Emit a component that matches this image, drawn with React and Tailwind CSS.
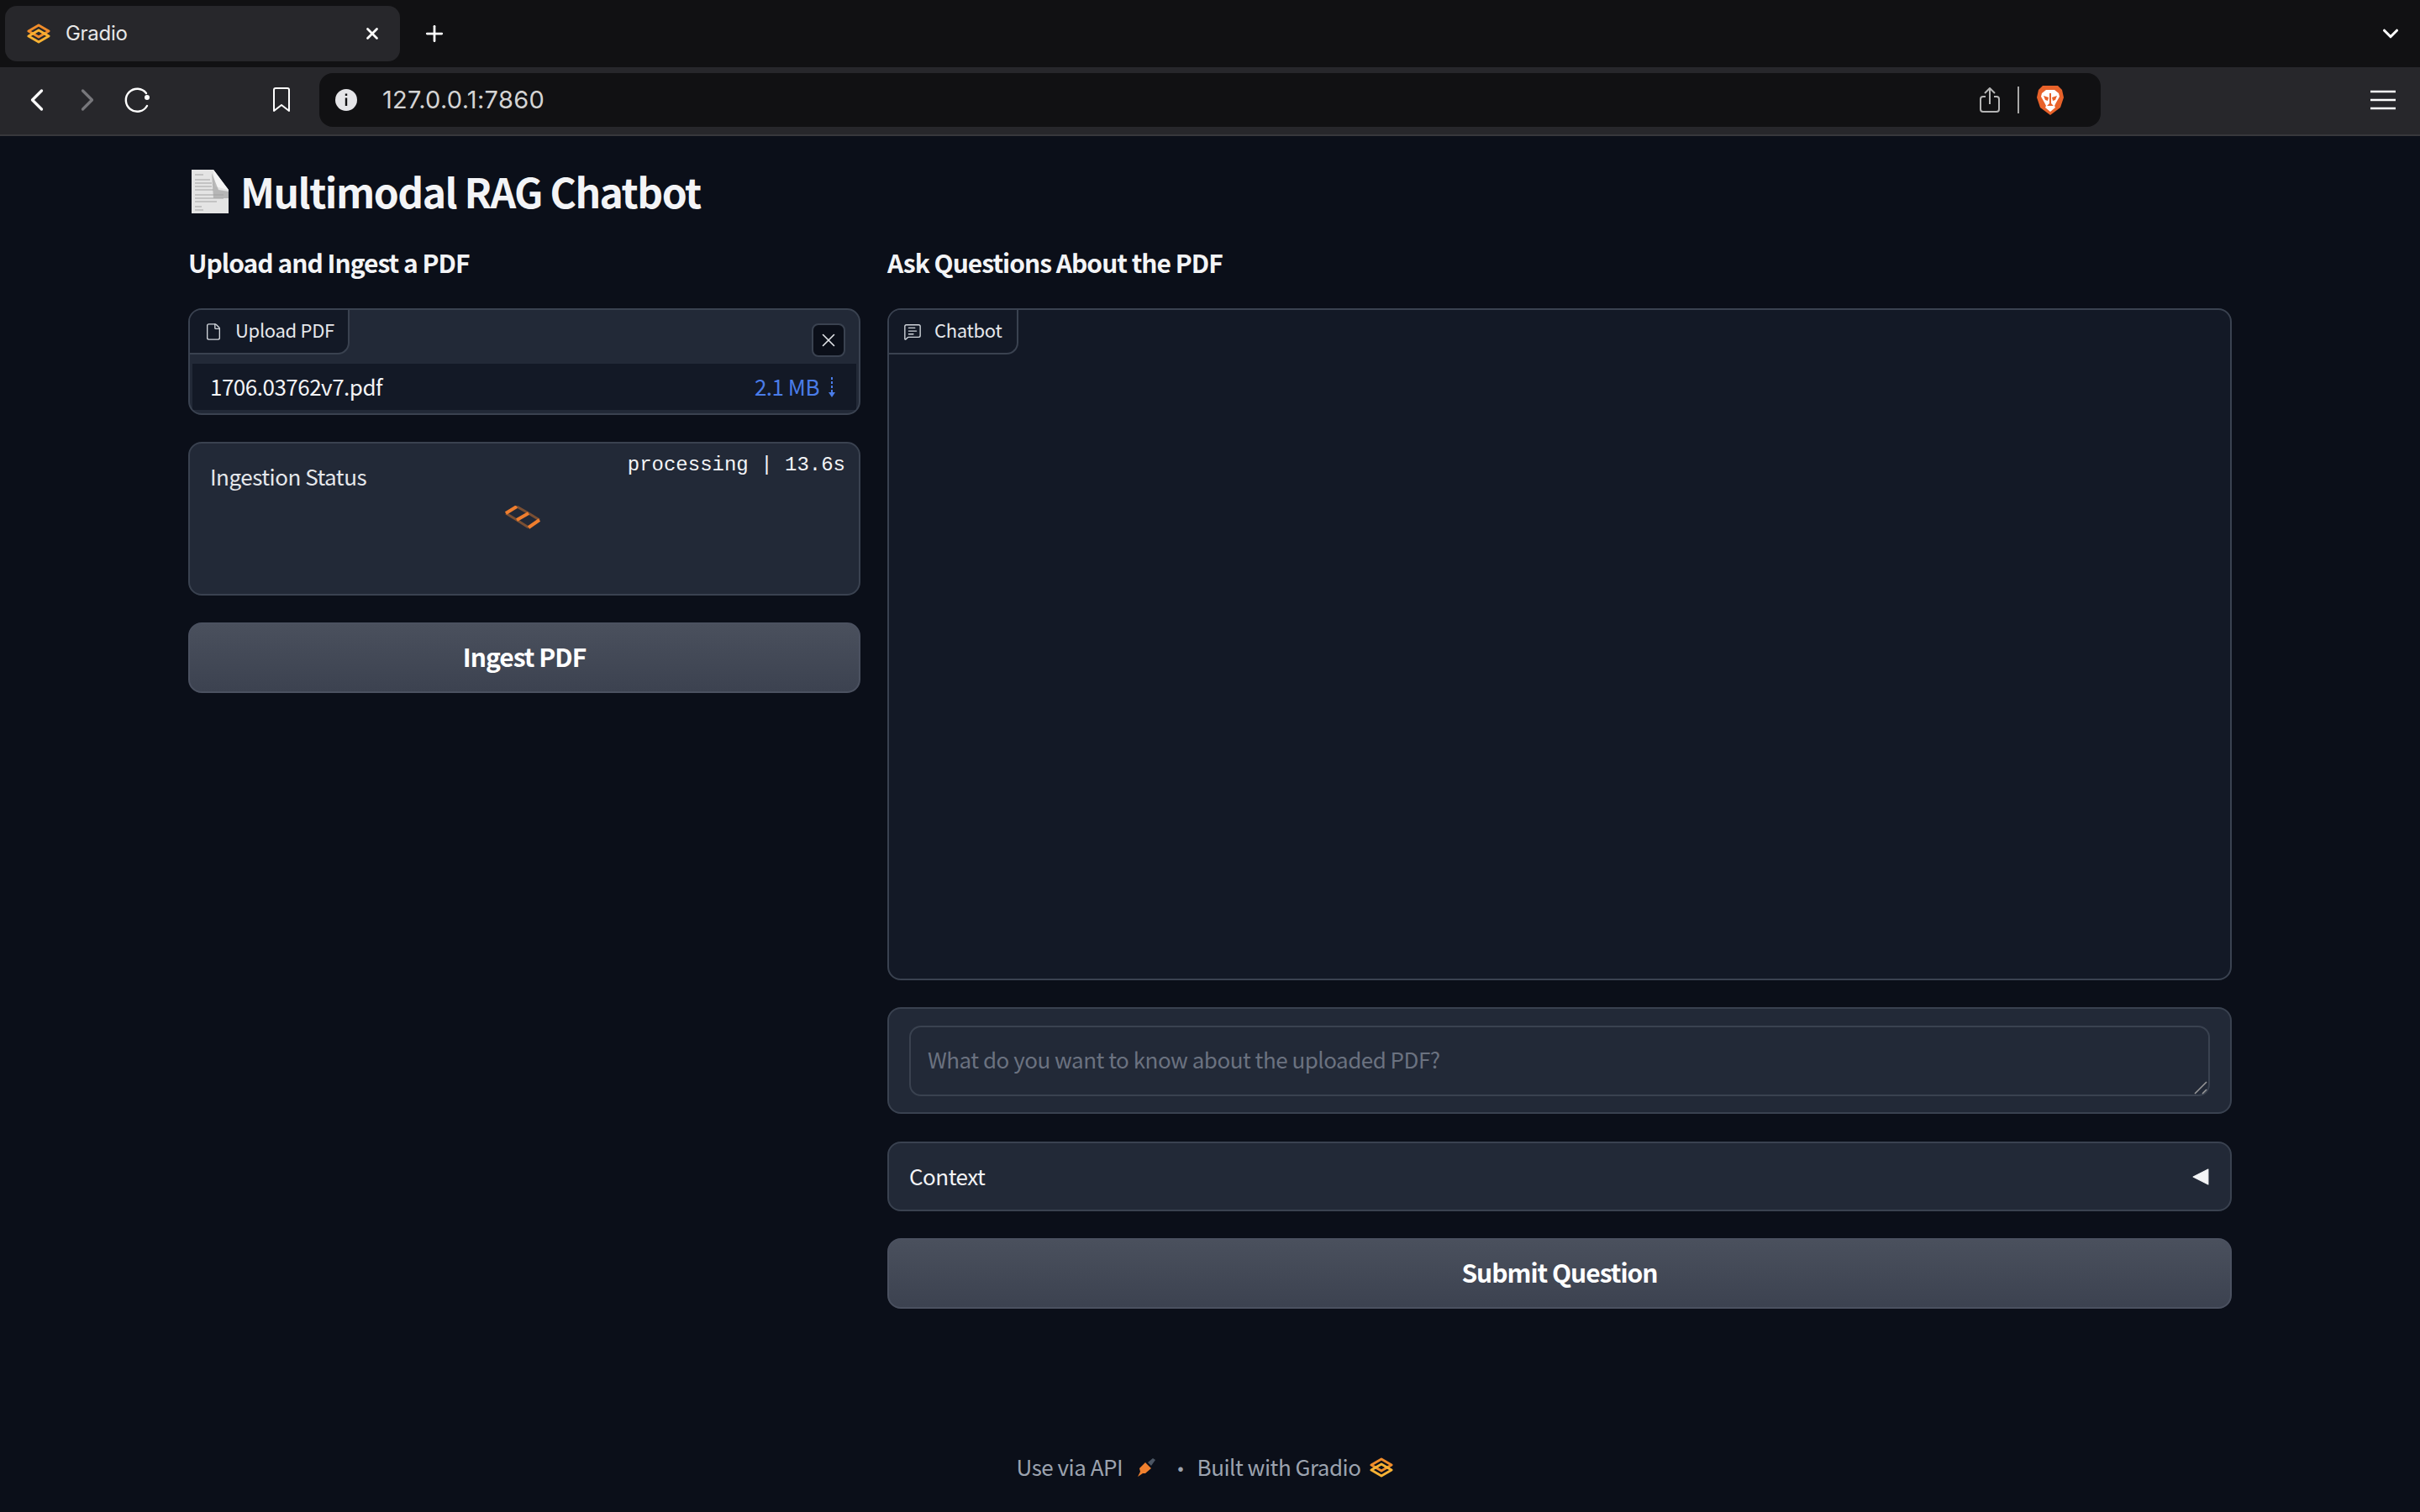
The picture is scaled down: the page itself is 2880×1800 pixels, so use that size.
import React from 'react';
import { ChevronLeft, ChevronRight, Plus, X, ChevronDown, File, MessageSquareText } from 'lucide-react';

const GradioLogo = ({ className }) => (
  <svg viewBox="0 0 28 24" className={className} fill="none" strokeWidth="3" strokeLinejoin="round">
    <path d="M14 2 L26 9 L14 16 L2 9 Z" stroke="#f08c2a" />
    <path d="M14 8 L26 15 L14 22 L2 15 Z" stroke="#f7b234" />
  </svg>
);

const DocIcon = () => (
  <svg viewBox="0 0 44 52" className="w-[44px] h-[52px] shrink-0 mr-[14px]">
    <path d="M0 0 H26 L44 24 V52 H0 Z" fill="#e4e4e4" />
    <path d="M26 0 L44 24 L28 20 Z" fill="#f4f4f4" />
    <path d="M24 4 L32 24 L44 26 V34 H26 Z" fill="#8f8f8f" opacity="0.55" />
    <g stroke="#a3a3a3" strokeWidth="1">
      <path d="M4 6 H14" />
      <path d="M4 12 H22" />
      <path d="M4 16 H24" />
      <path d="M4 20 H24" />
      <path d="M4 24 H26" />
      <path d="M4 30 H38" />
      <path d="M4 34 H38" />
      <path d="M4 38 H30" />
      <path d="M4 44 H12" />
      <path d="M4 48 H14" />
    </g>
  </svg>
);

const BraveLogo = () => (
  <svg viewBox="0 0 32 36" className="w-[32px] h-[36px]">
    <path d="M7 1 H25 L30 6 L32 15 L28 27 L16 36 L4 27 L0 15 L2 6 Z" fill="#e8622a" />
    <path d="M6 10 L11 6 H21 L26 10 L27 14 L23 21 L21 25 L22 27 L16 32 L10 27 L11 25 L9 21 L5 14 Z" fill="#ffffff" />
    <path d="M8 13 L14 15 L13 19 L10 18 Z M24 13 L18 15 L19 19 L22 18 Z" fill="#e8622a" />
    <path d="M15 10 H17 V22 L20 25 H12 L15 22 Z" fill="#e8622a" />
    <path d="M13 26 H19 L16 29 Z" fill="#ffffff" />
  </svg>
);

const ReloadIcon = () => (
  <svg viewBox="0 0 32 32" className="w-[32px] h-[32px]" fill="none" stroke="#ffffff" strokeWidth="2.4" strokeLinecap="round">
    <path d="M26 8 A13.5 13.5 0 1 0 27 23" />
    <circle cx="27" cy="13" r="3" fill="#ffffff" stroke="none" />
  </svg>
);

const BookmarkIcon = () => (
  <svg viewBox="0 0 24 32" className="w-[24px] h-[32px]" fill="none" stroke="#ffffff" strokeWidth="2" strokeLinejoin="round">
    <path d="M5 2 H19 A2 2 0 0 1 21 4 V29 L12 22 L3 29 V4 A2 2 0 0 1 5 2 Z" />
  </svg>
);

const InfoIcon = () => (
  <svg viewBox="0 0 28 28" className="w-[28px] h-[28px]">
    <circle cx="14" cy="14" r="13" fill="#e5e5e8" />
    <path d="M12.8 11.5 H15.2 V21 H12.8 Z M12.8 6.5 H15.2 V9 H12.8 Z" fill="#111113" />
  </svg>
);

const ShareIcon = () => (
  <svg viewBox="0 0 24 30" className="w-[24px] h-[30px]" fill="none" stroke="#b5b5b5" strokeWidth="2" strokeLinejoin="round">
    <path d="M7 11 H4 A3 3 0 0 0 1 14 V26 A3 3 0 0 0 4 29 H20 A3 3 0 0 0 23 26 V14 A3 3 0 0 0 20 11 H17" />
    <path d="M12 20 V2 M6 7 L12 1 L18 7" />
  </svg>
);

const MenuIcon = () => (
  <svg viewBox="0 0 30 24" className="w-[30px] h-[24px]" fill="none" stroke="#ffffff" strokeWidth="2.4">
    <path d="M0 2 H30 M0 12 H30 M0 22 H30" />
  </svg>
);

const Spinner = () => (
  <svg viewBox="0 0 42 28" className="w-[42px] h-[28px]" fill="none" strokeWidth="3">
    <path d="M14 1 L28 9 M28 9 L41 17 M1 9 L14 17 L28 26" stroke="#7a4f33" />
    <path d="M14 1 L1 9 M28 9 L14 17 M41 17 L28 26" stroke="#ee7d2e" strokeWidth="4" />
  </svg>
);

const BlockLabel = ({ icon: Icon, width, children }) => (
  <div className={`flex items-center h-[53px] ${width} pl-[17px] gap-[15px] border-r-2 border-b-2 border-[#3a4250] rounded-br-[14px] bg-[#131926] text-[22px] tracking-[-0.3px] text-[#e5e7eb]`}>
    <Icon size={22} strokeWidth={1.5} className="text-[#d1d5db]" />
    <span className="pb-[5px]">{children}</span>
  </div>
);

const PrimaryButton = ({ children }) => (
  <button className="h-[84px] w-full pb-[3px] rounded-[16px] border-2 border-[#4b5160] bg-gradient-to-b from-[#4a505d] to-[#3c4250] text-[30px] tracking-[-1px] font-semibold text-white">
    {children}
  </button>
);

export default function App() {
  return (
    <div className="flex flex-col h-[1800px] bg-[#0b0f19] text-[#f3f4f6] font-['Noto_Sans_CJK_SC','Noto_Sans',sans-serif] overflow-hidden">
      {/* browser chrome */}
      <div className="flex items-center h-[80px] pl-[6px] pr-[20px] bg-[#111113] font-['Inter',sans-serif]">
        <div className="flex items-center w-[470px] h-[66px] pl-[26px] pr-[22px] rounded-[14px] bg-[#27272b]">
          <GradioLogo className="w-[28px] h-[24px]" />
          <span className="ml-[18px] text-[24px] tracking-[-0.3px] text-[#e8e8e8]">Gradio</span>
          <X size={22} strokeWidth={3} className="ml-auto text-white" />
        </div>
        <Plus size={30} strokeWidth={2.2} className="ml-[26px] text-white" />
        <ChevronDown size={30} strokeWidth={2.5} className="ml-auto text-white" />
      </div>
      <div className="flex items-center h-[82px] pb-[2px] border-b-2 border-[#38383c] bg-[#27272b] font-['Inter',sans-serif]">
        <ChevronLeft size={44} strokeWidth={1.8} className="ml-[22px] text-white" />
        <ChevronRight size={44} strokeWidth={1.8} className="ml-[16px] text-[#77777b]" />
        <div className="ml-[22px]"><ReloadIcon /></div>
        <div className="ml-[143px]"><BookmarkIcon /></div>
        <div className="flex items-center w-[2120px] h-[64px] ml-[33px] pl-[18px] pr-[44px] rounded-[16px] bg-[#111113]">
          <InfoIcon />
          <span className="ml-[29px] text-[29px] tracking-[0.3px] text-[#d4d4d4]">127.0.0.1:7860</span>
          <div className="ml-auto"><ShareIcon /></div>
          <div className="w-[2px] h-[32px] mx-[21px] bg-[#a8a8a8]" />
          <BraveLogo />
        </div>
        <div className="ml-[321px]"><MenuIcon /></div>
      </div>

      {/* page */}
      <div className="flex flex-col flex-1 min-h-0 pl-[224px] pr-[224px]">
        <h1 className="flex items-center h-[56px] mt-[38px] ml-[4px] text-[48px] tracking-[-1.5px] font-semibold text-[#f3f4f6]">
          <DocIcon />
          <span className="pb-[3px]">Multimodal RAG Chatbot</span>
        </h1>

        <div className="flex gap-[32px] mt-[38px]">
          {/* left column */}
          <div className="flex flex-col w-[800px] shrink-0">
            <h2 className="h-[40px] mb-[33px] text-[30px] tracking-[-1px] leading-[36px] font-semibold">Upload and Ingest a PDF</h2>
            <div className="relative h-[127px] mb-[32px] rounded-[16px] border-2 border-[#3a4250] bg-[#222937] overflow-hidden">
              <BlockLabel icon={File} width="w-[190px]">Upload PDF</BlockLabel>
              <button className="absolute top-[16px] right-[16px] flex items-center justify-center w-[40px] h-[40px] rounded-[8px] border-2 border-[#3a4250] bg-[#0b0f19]">
                <X size={26} strokeWidth={1.5} className="text-[#e5e7eb]" />
              </button>
              <div className="flex items-center justify-between h-[55px] mt-[11px] mx-[3px] pl-[21px] pr-[22px] bg-[#131926] text-[26px] tracking-[-0.5px]">
                <span className="pb-[3px] text-[#f3f4f6]">1706.03762v7.pdf</span>
                <span className="flex items-center gap-[8px] text-[#4a7ce8]">
                  <span className="pb-[3px]">2.1 MB</span>
                  <svg viewBox="0 0 14 24" className="w-[14px] h-[24px]" fill="#4a7ce8">
                    <path d="M6 0 h2 v3 h-2 z M6 5 h2 v3 h-2 z M6 10 h2 v3 h-2 z M6 15 h2 v3 h3 l-4 6 l-4 -6 h3 z" />
                  </svg>
                </span>
              </div>
            </div>
            <div className="relative flex flex-col h-[183px] mb-[32px] pt-[21px] pl-[24px] rounded-[16px] border-2 border-[#3a4250] bg-[#222937]">
              <span className="text-[26px] tracking-[-0.5px] leading-[36px] text-[#e5e7eb]">Ingestion Status</span>
              <span className="absolute top-[10px] right-[16px] text-[24px] leading-[32px] text-[#f3f4f6] font-['Liberation_Mono',monospace]">processing | 13.6s</span>
              <div className="absolute inset-x-0 top-[74px] flex justify-center pr-[5px]">
                <Spinner />
              </div>
            </div>
            <PrimaryButton>Ingest PDF</PrimaryButton>
          </div>

          {/* right column */}
          <div className="flex flex-col flex-1 min-w-0">
            <h2 className="h-[40px] mb-[33px] text-[30px] tracking-[-1px] leading-[36px] font-semibold">Ask Questions About the PDF</h2>
            <div className="h-[800px] mb-[32px] rounded-[16px] border-2 border-[#3a4250] bg-[#131926] overflow-hidden">
              <BlockLabel icon={MessageSquareText} width="w-[154px]">Chatbot</BlockLabel>
            </div>
            <div className="h-[127px] mb-[33px] pt-[20px] px-[24px] rounded-[16px] border-2 border-[#3a4250] bg-[#222937]">
              <div className="relative">
                <textarea
                  rows={1}
                  placeholder="What do you want to know about the uploaded PDF?"
                  className="block w-full h-[84px] px-[20px] py-[18px] rounded-[14px] border-2 border-[#3a4250] bg-[#222937] text-[26px] tracking-[-0.5px] leading-[40px] placeholder:text-[#6b7280] outline-none resize-none"
                />
                <svg viewBox="0 0 16 16" className="absolute bottom-[2px] right-[3px] w-[16px] h-[16px]" fill="none" stroke="#9a9a9a" strokeWidth="1.5">
                  <path d="M1 15 L15 1 M10 15 L15 10" />
                </svg>
              </div>
            </div>
            <div className="flex items-center justify-between h-[83px] mb-[32px] pl-[24px] pr-[25px] rounded-[16px] border-2 border-[#3a4250] bg-[#222937]">
              <span className="pb-[3px] text-[26px] tracking-[-0.5px] text-[#f3f4f6]">Context</span>
              <svg viewBox="0 0 18 18" className="w-[20px] h-[20px]" fill="#f3f4f6" stroke="#f3f4f6" strokeLinejoin="round">
                <path d="M1 9 L17 1 V17 Z" />
              </svg>
            </div>
            <PrimaryButton>Submit Question</PrimaryButton>
          </div>
        </div>

        <footer className="flex items-center justify-center h-[36px] mt-auto mb-[35px] pr-[13px] text-[26px] tracking-[-0.5px] text-[#9ca3af]">
          <span className="pb-[3px]">Use via API</span>
          <svg viewBox="0 0 24 24" className="w-[24px] h-[24px] ml-[16px]">
            <path d="M14 6 L20 1 L23 3 L18 10 Z" fill="#4b5563" />
            <path d="M4 13 L11 6 L18 13 L11 19 H8 L2 23 L5 17 Z" fill="#f0802e" />
          </svg>
          <span className="ml-[16px] mr-[7px] text-[#9ca3af]">·</span>
          <span className="pb-[3px]">Built with Gradio</span>
          <GradioLogo className="w-[28px] h-[24px] ml-[10px]" />
        </footer>
      </div>
    </div>
  );
}
